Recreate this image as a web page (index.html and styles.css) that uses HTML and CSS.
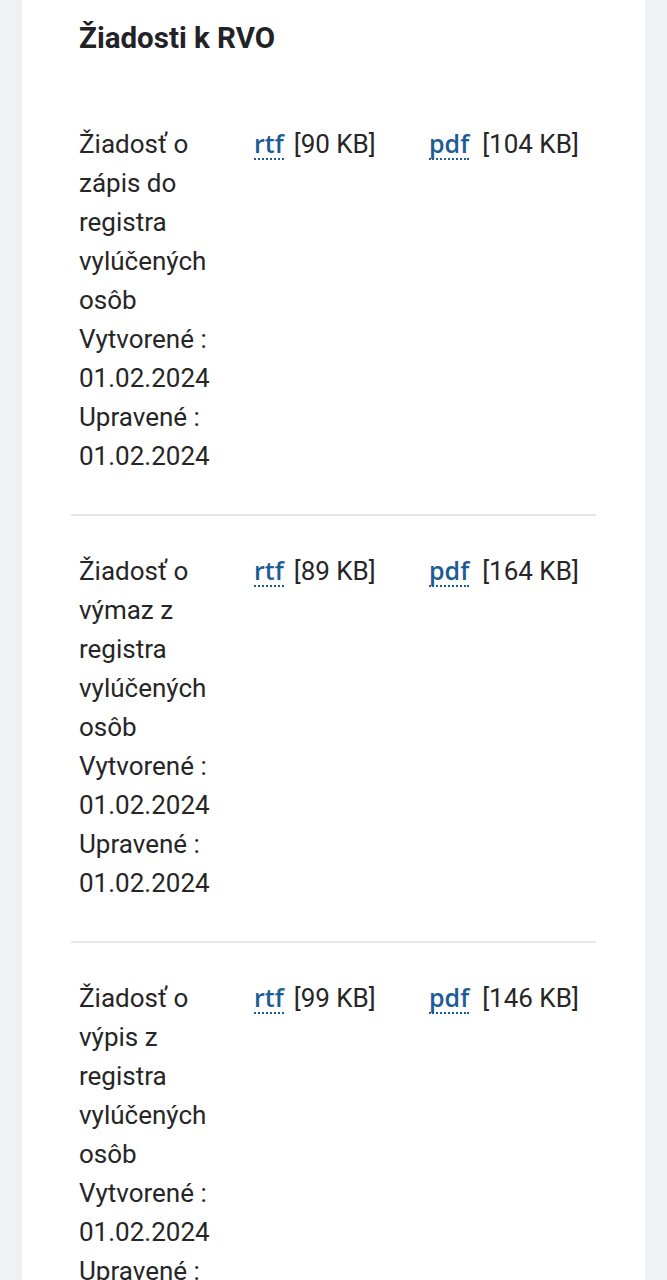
FILE: index.html
```html
<!DOCTYPE html>
<html lang="sk">
<head>
<meta charset="utf-8">
<title>Žiadosti k RVO</title>
<link rel="stylesheet" href="styles.css">
</head>
<body>
<main class="card">
  <h2 class="title">Žiadosti k RVO</h2>
  <table class="docs">
    <colgroup>
      <col class="col">
      <col class="col">
      <col class="col">
    </colgroup>
    <tbody>
      <tr>
        <td class="name">Žiadosť o zápis do registra vylúčených osôb<br>Vytvorené : 01.02.2024<br>Upravené : 01.02.2024</td>
        <td class="file"><a href="#" class="link">rtf</a><span class="size">[90 KB]</span></td>
        <td class="file"><a href="#" class="link link-pdf">pdf</a><span class="size">[104 KB]</span></td>
      </tr>
      <tr>
        <td class="name">Žiadosť o výmaz z registra vylúčených osôb<br>Vytvorené : 01.02.2024<br>Upravené : 01.02.2024</td>
        <td class="file"><a href="#" class="link">rtf</a><span class="size">[89 KB]</span></td>
        <td class="file"><a href="#" class="link link-pdf">pdf</a><span class="size">[164 KB]</span></td>
      </tr>
      <tr>
        <td class="name">Žiadosť o výpis z registra vylúčených osôb<br>Vytvorené : 01.02.2024<br>Upravené : 01.02.2024</td>
        <td class="file"><a href="#" class="link">rtf</a><span class="size">[99 KB]</span></td>
        <td class="file"><a href="#" class="link link-pdf">pdf</a><span class="size">[146 KB]</span></td>
      </tr>
    </tbody>
  </table>
</main>
</body>
</html>
```
FILE: styles.css
```css
html, body {
  margin: 0;
  padding: 0;
  background: #eff1f5;
}
body {
  font-family: Roboto, "Liberation Sans", sans-serif;
  color: #262626;
}
.card {
  margin: 0 22px;
  background: #ffffff;
  padding: 20px 49px 0 49px;
  min-height: 1280px;
  box-sizing: border-box;
}
.title {
  margin: 0 0 32px 8px;
  font-size: 29.5px;
  line-height: 36px;
  font-weight: 700;
  color: #222326;
}
.docs {
  width: 525px;
  border-collapse: collapse;
  table-layout: fixed;
}
.col {
  width: 175px;
}
.docs tr + tr td {
  border-top: 2px solid #e6e6e6;
  padding-top: 36px;
}
.docs td {
  vertical-align: top;
  padding: 37px 8px 38px 8px;
  font-size: 26px;
  line-height: 39px;
}
.name {
  color: #262626;
}
.file {
  white-space: nowrap;
}
.link {
  display: inline-block;
  font-family: "Open Sans", Roboto, sans-serif;
  font-weight: 600;
  font-size: 25px;
  line-height: 30px;
  color: #1c5c96;
  text-decoration: none;
  border-bottom: 2px dotted #1c5c96;
  margin-right: 10px;
}
.link-pdf {
  margin-right: 13px;
}
.size {
  color: #262626;
}
```
